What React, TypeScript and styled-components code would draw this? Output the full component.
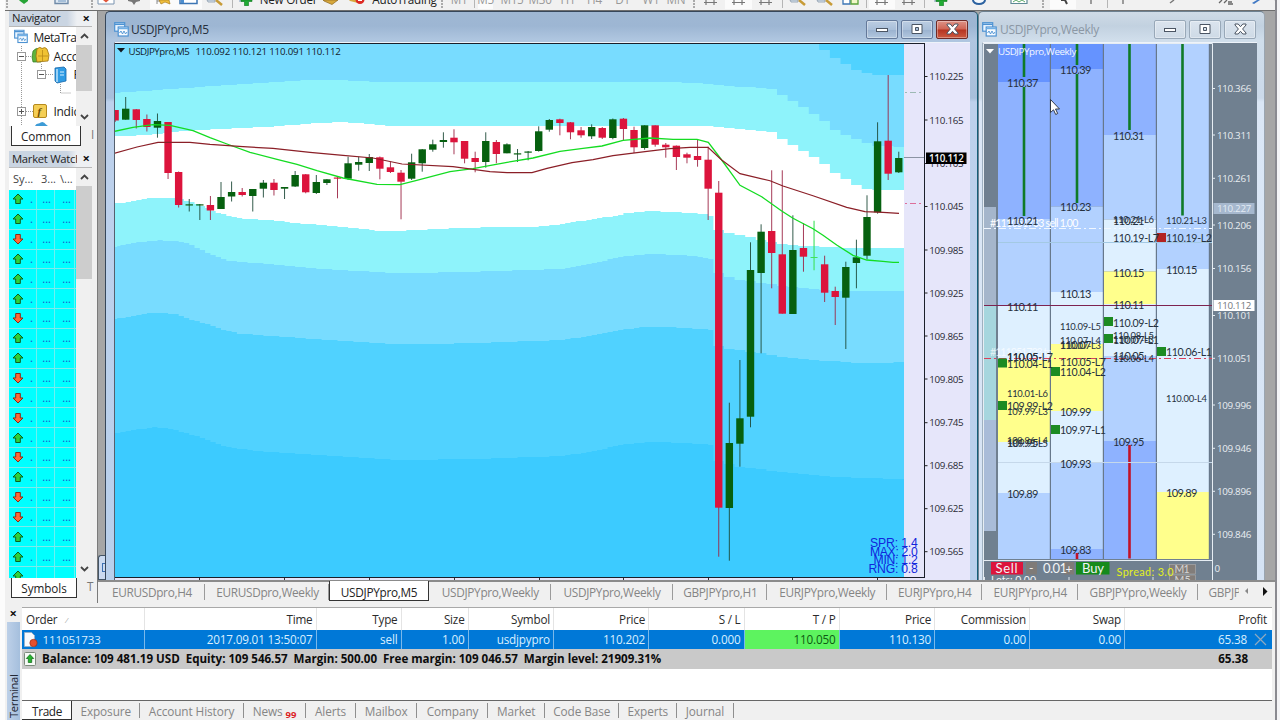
import React from "react";
import styled, { createGlobalStyle } from "styled-components";

const Global = createGlobalStyle`
  * { box-sizing: border-box; }
  body { margin: 0; background: #f0f0f0; font-family: "Open Sans", "Noto Sans", sans-serif; }
`;

const UI = `"Open Sans", "Noto Sans", sans-serif`;

/* ---------- frame ---------- */
const Screen = styled.div`
  display: flex; width: 1280px; height: 720px; overflow: hidden; background: #f0f0f0;
  font-family: ${UI}; font-size: 11.7px; letter-spacing: -0.3px; color: #222; white-space: nowrap;
`;
const LeftEdge = styled.div`width: 5px; background: #fcfcfc;`;
const Main = styled.div`width: 1270px; display: flex; flex-direction: column;`;
const RightEdge = styled.div`width: 5px; background: #f4f4f6; border-left: 2px solid #8a8a90;`;

/* ---------- toolbar ---------- */
const Toolbar = styled.div`
  height: 11px; overflow: hidden; display: flex; align-items: flex-start;
  border-bottom: 1px solid #6e6e6e; background: #f1f1f1;
`;
const ToolCell = styled.div<{ $w: number; $on?: boolean }>`
  flex: none; width: ${(p) => p.$w}px; height: 9px; display: flex; justify-content: center;
  background: ${(p) => (p.$on ? "#fbfbfb" : "transparent")};
  svg { display: block; flex: none; }
`;
const ToolText = styled.span<{ $dim?: boolean }>`
  margin-top: -9.5px; line-height: 16px; height: 16px; font-size: 11.7px; letter-spacing: -0.25px;
  margin-left: ${(p) => (p.$dim ? 0 : 3)}px; color: ${(p) => (p.$dim ? "#999" : "#222")};
`;
const Grip = styled.div`width: 2px; height: 8px; border-left: 2px dotted #aaa;`;
const Rule = styled.div`width: 1px; height: 8px; background: #b5b5b5;`;

type IconKind =
  | "newdoc" | "box" | "diamond" | "cross" | "star" | "panel" | "lens" | "plus" | "gold" | "auto"
  | "bars" | "tiles" | "clock" | "image" | "arrow" | "vline" | "slash" | "wave" | "pen" | "shape";

function ToolIcon({ kind }: { kind: IconKind }) {
  const art: Record<IconKind, React.ReactNode> = {
    newdoc: <path d="M5 0h9v1l-4 3-4-3z" fill="#27a436" />,
    box: <><path d="M3 0v3.500h13V0" fill="#dfeaf5" stroke="#6f8aa8" strokeWidth="1.400" /><path d="M6 1h8" stroke="#6d94bd" /></>,
    diamond: <><path d="M2 0v4h16V0" fill="#fff" stroke="#7a94b0" /><path d="M7 0l3 2.500L13 0z" fill="#e0553a" /></>,
    cross: <path d="M4 0h12v1l-4 1-2 3-2-3-4-1z" fill="#777" />,
    star: <><path d="M4 0v4M4 1h3" stroke="#8a8a8a" fill="none" /><path d="M6 0h10l1 4-5-2-4 2z" fill="#f0bf3c" stroke="#aa7d1c" strokeWidth=".700" /></>,
    panel: <><path d="M1 0v3.500h17V0" fill="#fff" stroke="#3c76b5" strokeWidth="1.500" /><path d="M2 0h3v3H2z" fill="#4d8fd0" /></>,
    lens: <><path d="M2 0h8v2H3z" fill="#d9e4ee" stroke="#8b9aab" strokeWidth=".800" /><path d="M11 0l6 5" stroke="#c79b37" strokeWidth="2.500" /></>,
    plus: <><path d="M3 0h7v2H3z" fill="#b8c7d8" /><path d="M5 0h11v1.500h-3.500v4.200h-4V1.500H5z" fill="#21ac34" stroke="#0d7a1e" strokeWidth=".600" /></>,
    gold: <path d="M2 0h15l-6 4.500L3 1z" fill="#d7a83c" stroke="#8d661c" strokeWidth=".700" />,
    auto: <><path d="M2 0h9v3L3 1z" fill="#d7a83c" /><circle cx="13" cy="-.5" r="4.500" fill="#dd2a24" /><path d="M11 0h4v1h-4z" fill="#fff" /></>,
    bars: <path d="M3 2.500h13M5 0v5M13 0v5" stroke="#777" strokeWidth="1.200" />,
    tiles: <><path d="M2 0v4h7V0" fill="#fff" stroke="#3c76b5" strokeWidth="1.300" /><path d="M10 0v4h7V0" fill="#f1f7c9" stroke="#5ba33a" strokeWidth="1.300" /></>,
    clock: <path d="M4 0a6 4 0 0 0 12 0" fill="#f4f8fc" stroke="#2c62a0" strokeWidth="2" />,
    image: <><path d="M2 0v3.500h16V0" fill="#fff" stroke="#5e8a96" strokeWidth="1.200" /><path d="M4 2l3-2 3 2 3-2 3 2" fill="none" stroke="#5aa867" /></>,
    arrow: <path d="M8 0h4l2 4" fill="none" stroke="#444" strokeWidth="2" />,
    vline: <path d="M10 0v4" stroke="#777" strokeWidth="1.400" />,
    slash: <path d="M7 3l4-3" stroke="#777" strokeWidth="1.400" />,
    wave: <path d="M3 3l3-3M8 3l3-3M12 4h5M12 2h4" stroke="#666" strokeWidth="1.300" />,
    pen: <path d="M6 3l5-3h3l-6 4z" fill="#3f78c4" />,
    shape: <><path d="M2 0q5 3 10 1" fill="none" stroke="#888" strokeWidth="1.500" /><path d="M13 0l3 1" stroke="#888" strokeWidth="2" /></>,
  };
  return <svg width="20" height="6" viewBox="0 0 20 6">{art[kind]}</svg>;
}

type ToolDef = [number, IconKind | "grip" | "rule" | "gap" | "text" | "dim", string?, boolean?];
const TOOLS: ToolDef[] = [
  [4, "grip"], [30, "newdoc"], [46, "box"], [6, "gap"], [2, "grip"], [2, "gap"], [22, "diamond"], [33, "cross"],
  [26, "star", "", true], [26, "panel", "", true], [26, "lens"], [8, "rule"], [20, "plus"], [62, "text", "New Order"],
  [26, "gold"], [26, "auto"], [66, "text", "AutoTrading"], [12, "grip"], [22, "dim", "M1"], [8, "rule"], [15, "dim", "M5", true],
  [38, "dim", "M15"], [18, "dim", "M30"], [38, "dim", "H1"], [15, "dim", "H4"], [41, "dim", "D1"], [16, "dim", "W1"], [34, "dim", "MN"],
  [2, "grip"], [2, "gap"], [28, "bars"], [27, "bars", "", true], [28, "bars"], [4, "rule"], [28, "lens"], [26, "lens"], [26, "tiles"],
  [5, "rule"], [26, "bars", "", true], [27, "bars"], [4, "rule"], [30, "plus"], [46, "clock"], [34, "image"],
  [14, "grip"], [26, "arrow", "", true], [30, "vline"], [2, "rule"], [30, "vline"], [70, "slash"], [36, "wave"], [2, "gap"], [20, "pen"], [34, "shape"],
];

/* ---------- docked panels ---------- */
const Workspace = styled.div`height: 592px; display: flex;`;
const Dock = styled.div`
  width: 92px; padding-left: 4px; display: flex; flex-direction: column; border-right: 0;
`;
const PanelTitle = styled.div<{ $h: number }>`
  width: 83px; height: ${(p) => p.$h}px; flex: none; display: flex; align-items: center; justify-content: space-between;
  padding: 0 2px 2px 3px; background: linear-gradient(90deg, #cad5e2 70%, #eef0f3 82%); font-size: 11.3px; overflow: hidden;
`;
const TitleWords = styled.span`width: 65px; overflow: hidden; line-height: 15px;`;
const CloseMark = styled.span`font-size: 13px; font-weight: 700; line-height: 14px; color: #111; letter-spacing: 0;`;
const PanelBody = styled.div<{ $h: number }>`
  width: 83px; height: ${(p) => p.$h}px; flex: none; display: flex; border-top: 1px solid #b9b9b9; overflow: hidden;
`;
const PanelContent = styled.div`width: 67px; background: #fff; overflow: hidden;`;
const Scroll = styled.div`
  width: 16px; background: #f0f0f0; display: flex; flex-direction: column; align-items: center;
  svg { display: block; flex: none; margin: 6px 0 6px; }
`;
const Thumb = styled.div<{ $h: number }>`width: 16px; height: ${(p) => p.$h}px; background: #cdcdcd;`;
const Grow = styled.div`flex: 1;`;
const PanelTabs = styled.div<{ $h: number }>`
  width: 87px; height: ${(p) => p.$h}px; flex: none; display: flex; padding-left: 2px; color: #777;
`;
const PanelTab = styled.div<{ $w: number }>`
  width: ${(p) => p.$w}px; height: 20px; background: #fff; border: 1px solid #333; border-top: 0;
  text-align: center; line-height: 20px; color: #222; margin-right: 10px; letter-spacing: -0.05px;
`;
const WatchHead = styled.div`height: 22px; display: flex; line-height: 22px; color: #444; font-size: 11px;`;
const HeadCell = styled.div<{ $w: number }>`width: ${(p) => p.$w}px; padding-left: 4px; overflow: hidden; letter-spacing: 0;`;
const WatchRow = styled.div`height: 19.85px; display: flex; background: #00ffff; border-bottom: 1px solid #7fe9e9;`;
const WatchCell = styled.div<{ $w: number }>`
  width: ${(p) => p.$w}px; display: flex; align-items: center; justify-content: flex-end; border-right: 1px solid #6df0f0;
  color: #1d55c8; line-height: 18px; padding: 0 3px; font-size: 11px; letter-spacing: 0;
  svg { margin-right: auto; }
`;

const Chevron = ({ up }: { up?: boolean }) => (
  <svg width="9" height="6" viewBox="0 0 9 6"><path d={up ? "M1 5l3.500-3.500L8 5" : "M1 1l3.500 3.500L8 1"} fill="none" stroke="#444" strokeWidth="1.800" /></svg>
);
const Tick = ({ up }: { up: boolean }) => (
  <svg width="12" height="12" viewBox="0 0 12 12">
    <path d="M6 1l5 5H8.300v4.500H3.700V6H1z" fill={up ? "#2fd03a" : "#ff6a36"} stroke={up ? "#0c5f1c" : "#8b2a14"} strokeWidth="1"
      transform={up ? undefined : "rotate(180 6 6)"} />
  </svg>
);
const WindowsIcon = ({ size = 15 }: { size?: number }) => (
  <svg width={size} height={size} viewBox="0 0 15 15">
    <rect x=".700" y=".700" width="10" height="8.500" fill="#eaf5ff" stroke="#4d92d2" strokeWidth="1.200" />
    <path d="M1 2.300h9.500" stroke="#4d92d2" strokeWidth="1.500" />
    <rect x="4.200" y="5" width="10" height="9" fill="#f7fbff" stroke="#4d92d2" strokeWidth="1.200" />
    <path d="M4.500 6.500h9.500" stroke="#71b0e6" strokeWidth="1.500" />
    <path d="M5.500 11l1.500-2 1.500 3 1.500-3 1.500 3 1.500-2" fill="none" stroke="#4d92d2" strokeWidth=".900" />
  </svg>
);

function NavTree() {
  return (
    <svg width="67" height="99" viewBox="9 27 67 99">
      <g stroke="#999" strokeDasharray="1 1" fill="none">
        <path d="M21.500 46v80M26 56.500h7M41.500 64v6M46 74.500h7M60.500 84v9h11M26 111.500h7" />
      </g>
      <g fill="#fff" stroke="#999"><rect x="17.500" y="52.500" width="8" height="8" /><rect x="37.500" y="70.500" width="8" height="8" /><rect x="17.500" y="107.500" width="8" height="8" /></g>
      <path d="M19 56.500h5M39 74.500h5M19 111.500h5M21.500 109v5" stroke="#555" />
      <g transform="translate(14 29.500)"><WindowsIcon size={14} /></g>
      <path d="M33 51q3-4 7-2l2 6-1 7-8 0-1-5z" fill="#5fb33c" stroke="#2f7a1f" strokeWidth=".700" />
      <path d="M37 49q3-3 5-.5 3-2 5 .5l2 6-1 6-11 1-1-6z" fill="#f0c233" stroke="#9d7413" strokeWidth=".800" />
      <path d="M42.500 50v11M38 56h10" stroke="#b98a18" strokeWidth=".800" />
      <path d="M55 68l9-1 2 2v12l-9 2-2-2z" fill="#2f9be4" stroke="#1566a8" strokeWidth=".800" />
      <path d="M57 69v13" stroke="#bfe3fb" strokeWidth="1.500" /><path d="M60 72h4M60 75h4" stroke="#d6efff" />
      <rect x="33.500" y="104.500" width="13" height="13" rx="1.500" fill="#f4ce55" stroke="#b58a1e" />
      <text x="37.500" y="115" fontFamily="Liberation Serif, serif" fontSize="11" fontStyle="italic" fontWeight="700" fill="#6b4a00">f</text>
      <path d="M35 126q1-3 4-2.500 4-3.500 7 1l2 1.500z" fill="#3d9bd6" />
      <g fontFamily={UI} fontSize="12" fill="#222">
        <text x="33.500" y="42" textLength="43">MetaTra</text>
        <text x="53.500" y="60.500">Acco</text>
        <text x="73.500" y="78.500">F</text>
        <text x="53.500" y="116">Indic</text>
      </g>
    </svg>
  );
}

/* ---------- chart windows ---------- */
const Mdi = styled.div`flex: 1; display: flex; flex-direction: column; overflow: hidden; border-left: 1px solid #7a7a7a;`;
const Desktop = styled.div`height: 569px; display: flex; background: #a6a6a6; overflow: hidden;`;
const Gutter = styled.div`width: 7px; display: flex; flex-direction: column; justify-content: flex-end;`;
const Stub = styled.div`height: 25px; border: 1px solid #456; border-radius: 3px 0 0 0; border-right: 0; background: #cbdaf0;
  display: flex; align-items: center; justify-content: flex-end;`;
const StubIcon = styled.div`width: 3px; height: 9px; border: 1px solid #3c6fb0; border-right: 0;`;
const Window = styled.div<{ $w: number; $active?: boolean }>`
  width: ${(p) => p.$w}px; flex: none; display: flex; flex-direction: column; padding: 1px 7px 0 ${(p) => (p.$active ? 8 : 3)}px;
  border: 1px solid ${(p) => (p.$active ? "#37475a" : "#6d8191")}; border-bottom: 0; border-radius: 5px 5px 0 0;
  border-right-color: ${(p) => (p.$active ? "#155f78" : "#9aa5b0")};
  background: ${(p) => p.$active
    ? "linear-gradient(#9fb7d3 0, #9db6d3 14px, #afc6e0 28px, #a7bfdb 86px, #bdd1ec 90px, #b9d0ec)"
    : "linear-gradient(#cfdbe7 0, #c2d1e0 14px, #d0deeb 28px, #ccdaea 86px, #dbe7f6 90px, #d5e3f4)"};
`;
const Caption = styled.div<{ $active?: boolean }>`
  height: 29px; flex: none; display: flex; align-items: center; gap: ${(p) => (p.$active ? 2 : 3)}px;
  padding: 4px ${(p) => (p.$active ? 2 : 1)}px 0 0;
  color: ${(p) => (p.$active ? "#26303d" : "#8b97a4")}; font-size: 12px;
`;
const CaptionText = styled.span`flex: 1; letter-spacing: -0.3px;`;
const Buttons = styled.div`display: flex; gap: 3px;`;
const CapButton = styled.div<{ $tone: "blue" | "red" | "pale" }>`
  width: 32px; height: 19px; display: flex; align-items: center; justify-content: center; border-radius: 2px;
  border: 1px solid ${(p) => (p.$tone === "red" ? "#6e2a26" : p.$tone === "blue" ? "#64799a" : "#98a8b8")};
  box-shadow: inset 0 0 0 1px rgba(255, 255, 255, 0.35); margin-top: -1px;
  background: ${(p) =>
    p.$tone === "red" ? "linear-gradient(#dd9387, #cf6454 48%, #b53320 52%, #cc5a40)"
    : p.$tone === "blue" ? "linear-gradient(#bccde2, #a9bfd9 50%, #9ab2cf 52%, #b2c7df)"
    : "linear-gradient(#dbe4ee, #cedae6)"};
`;
const Client = styled.div<{ $active?: boolean }>`
  flex: 1; border-top: 1px solid #eef3fa; border-left: 1px solid ${(p) => (p.$active ? "#55606e" : "#9fb0c0")};
  overflow: hidden; background: ${(p) => (p.$active ? "#e6e6fa" : "#708090")};
  svg { display: block; }
`;

function CaptionButtons({ active }: { active?: boolean }) {
  const tone = active ? "blue" : "pale";
  const s = { stroke: "#4b5563", strokeWidth: 1, fill: "#fff" };
  return (
    <Buttons>
      <CapButton $tone={tone}><svg width="12" height="12" viewBox="0 0 12 12"><rect x=".500" y="5.500" width="11" height="3" {...s} /></svg></CapButton>
      <CapButton $tone={tone}><svg width="12" height="12" viewBox="0 0 12 12"><path d="M1 1.500h10v9H1zM4.500 4.500v3h3v-3z" fillRule="evenodd" {...s} /></svg></CapButton>
      <CapButton $tone={active ? "red" : "pale"}><svg width="13" height="12" viewBox="0 0 13 12"><path d="M1 1h3.200l2.300 2.700L8.800 1H12v1L8.600 6l3.400 4v1H8.800L6.500 8.300 4.200 11H1v-1l3.400-4L1 2z" {...s} /></svg></CapButton>
    </Buttons>
  );
}

type Pts = [number, number][];
const BAR = 10.59;
const barX = (i: number) => 125.7 + BAR * i;
const at = (pts: Pts, x: number) => {
  if (x <= pts[0][0]) return pts[0][1];
  for (let k = 1; k < pts.length; k++) {
    const [x1, y1] = pts[k];
    const [x0, y0] = pts[k - 1];
    if (x <= x1) return y0 + ((y1 - y0) * (x - x0)) / (x1 - x0);
  }
  return pts[pts.length - 1][1];
};
const stepPath = (pts: Pts, fromBar = -1) => {
  let d = "";
  for (let i = fromBar; i <= 73; i++) {
    const xl = i === -1 ? 114 : barX(i) - BAR / 2;
    const xr = i === 73 ? 904 : barX(i) + BAR / 2;
    const half = (xl + xr) / 2;
    const steep = barX(i) > 712;
    const ya = Math.round(steep ? at(pts, barX(i)) : at(pts, (xl + half) / 2));
    const yb = Math.round(steep ? at(pts, barX(i)) : at(pts, (xr + half) / 2));
    d += `${d ? "L" : "M"}${xl.toFixed(1)} ${ya}H${half.toFixed(1)}V${yb}H${xr.toFixed(1)}`;
  }
  return d;
};

const TOP_CAP: Pts = [[813, 43], [824, 49], [834.500, 57.300], [845, 64], [856, 69.700], [866.700, 73.300], [877, 74.500], [904, 74.700]];
const UPPER_OUT: Pts = [[115, 93], [200, 87], [300, 80.500], [335, 80], [370, 81.500], [400, 82.300], [680, 82.300], [713, 84], [745, 87], [771, 88.300], [782, 95], [792.700, 101], [803.300, 107.300], [814, 113.500], [824.500, 121], [835, 130], [845.500, 134.500], [856, 139], [866.700, 143], [877, 146], [904, 147]];
const UPPER_IN: Pts = [[115, 136.500], [147, 135], [175, 132], [200, 130], [270, 126.700], [323, 122.700], [343, 122.200], [377, 124.500], [393, 126], [640, 126], [713, 126], [747, 130], [771, 131], [782, 139.300], [792.700, 145.300], [803.300, 151], [814, 156.700], [824.500, 164], [835, 172.700], [845.500, 179], [856, 184.700], [866.700, 189.300], [877, 190], [904, 190]];
const LOWER_IN: Pts = [[115, 203.500], [132, 201.500], [150, 198], [172, 197.700], [184, 200], [194, 203], [210, 209], [216, 213], [227, 215], [237, 218.300], [270, 220.300], [297, 223], [323, 225.300], [353, 228], [377, 230.600], [400, 230.700], [420, 230], [460, 228], [500, 227], [533, 227.300], [553, 225.300], [577, 221.700], [600, 218], [617, 215.700], [628, 213], [650, 211], [677, 212.300], [703, 213.700], [712, 216], [719, 231], [747, 236.700], [777, 243], [800, 246], [830, 247], [860, 248.300], [904, 247.700]];
const LOWER_OUT: Pts = [[115, 247.300], [133, 243], [157, 240.300], [175, 241], [190, 244], [207, 252.700], [225, 260], [240, 262], [270, 264], [320, 268.700], [400, 273.500], [480, 271.500], [560, 269], [590, 264], [620, 257], [650, 254], [680, 255], [710, 258], [719, 273], [736, 279], [770, 284], [800, 288], [830, 291], [850, 291.500], [904, 290.700]];
const BAND_3: Pts = [[115, 319], [133, 315.700], [157, 312.300], [175, 314], [190, 319], [207, 324], [220, 328.700], [240, 333.700], [270, 336], [320, 339.300], [400, 344.500], [480, 343], [560, 340], [590, 336], [620, 330], [650, 326.500], [680, 327.700], [713, 330], [719, 347], [760, 353], [790, 358], [820, 360.700], [870, 363.300], [904, 362.300]];
const BAND_4: Pts = [[115, 433.300], [133, 430], [157, 427], [175, 430], [200, 437], [220, 445], [240, 449], [270, 452], [320, 455], [400, 460], [480, 459], [560, 456], [590, 452], [620, 445], [650, 442], [680, 442.700], [713, 444.700], [719, 462], [745, 467.700], [790, 472.700], [830, 476.700], [904, 479]];

const FAST: Pts = [[114, 131.500], [133, 127.300], [153, 124.700], [170, 125.300], [193, 130.700], [210, 137.700], [227, 144], [250, 152.300], [277, 159.300], [297, 164.300], [317, 170.700], [343, 178], [377, 184.300], [400, 184.700], [416.700, 180.300], [450, 171.700], [473, 168.700], [507, 162.300], [533, 158], [560, 151.300], [583, 148.300], [602, 146], [623, 140.300], [650, 138], [673, 139.300], [697, 139.300], [708.300, 142.300], [721.700, 160], [740, 185.300], [761.700, 196.700], [781.700, 211], [793, 218.300], [813, 228.700], [823, 235.300], [836.700, 245], [853, 255.300], [866.700, 260], [883, 261.300], [893, 262.300], [899, 262.300]];
const SLOW: Pts = [[114, 153.500], [137, 147], [158, 142.300], [190, 142.300], [210, 144.300], [243, 146.700], [273, 148.300], [310, 152.300], [343, 155.300], [373, 158], [402, 164], [453, 166.700], [490, 171.700], [507, 172.700], [532, 172.700], [547, 168.300], [572, 162.700], [593, 159.700], [613, 155.700], [647, 151.300], [670, 148.700], [690, 147.300], [708, 147.300], [721.700, 160], [740, 173.700], [770, 180.700], [783, 186], [813, 195.700], [846.700, 207.300], [865, 211.700], [883, 212.300], [899, 213.300]];

/* high, body top, body bottom, low, direction — starting one bar left of the visible edge */
type Candle = [number, number, number, number, "u" | "d"];
const CANDLES: Candle[] = [
  [110, 110, 120.500, 122, "d"], [97, 108.700, 119.700, 119.700, "u"], [109, 109.300, 120, 128.500, "d"], [114.500, 119, 127, 131.500, "d"],
  [113.500, 121, 127.700, 137.700, "u"], [122, 122, 173, 179, "d"], [171.500, 172, 205, 207.500, "d"], [199, 204.300, 205.500, 211.500, "u"],
  [204, 204.300, 205.500, 220, "u"], [196, 205, 210.500, 220, "d"], [182, 197, 209, 209, "u"], [181.500, 192, 196.500, 201.500, "u"],
  [188, 192, 195, 196.500, "d"], [189, 189, 196, 211.500, "u"], [180, 182.700, 188.700, 197.500, "u"], [179, 182.700, 190, 195.500, "d"],
  [187, 187, 188.700, 199, "u"], [171, 175, 186.500, 187, "u"], [174, 174.300, 192.300, 193.300, "d"], [175, 182, 193, 194, "u"],
  [179, 179.300, 183, 185, "u"], [176.500, 177.500, 178.500, 198.300, "d"], [156.700, 163.300, 178.700, 180, "u"], [156.700, 162, 164.700, 170.700, "u"],
  [154, 157, 163, 171, "u"], [156.500, 157.300, 168.700, 179.300, "d"], [161.700, 167.300, 172, 173, "d"], [170, 172.700, 181.700, 219.300, "d"],
  [153.700, 162.300, 178.700, 180, "u"], [149, 149.300, 163.300, 171.700, "u"], [139.700, 144.300, 149.700, 151.700, "u"], [132.300, 140, 142, 147.700, "u"],
  [129.300, 137.700, 142.300, 154.300, "d"], [141, 141, 158.700, 163.300, "d"], [151.700, 158, 162, 172.300, "d"], [132.300, 141, 162, 167.700, "u"],
  [140, 142, 154, 163.300, "d"], [143.300, 144.300, 153.300, 153.300, "u"], [149, 153.300, 154.500, 162, "u"], [151, 151.500, 152.700, 160.300, "u"],
  [126.300, 131.300, 151, 151.700, "u"], [119, 120, 129.700, 131.700, "u"], [118.700, 119.300, 123, 135.300, "d"], [122, 122.300, 132.300, 139.300, "d"],
  [127, 130.300, 135.300, 137.700, "d"], [124.300, 127, 136.300, 139, "u"], [127, 128, 137.700, 139, "d"], [118.500, 119.300, 138, 139.300, "u"],
  [118, 118.700, 129, 140, "d"], [126.700, 130, 147.300, 153, "d"], [125.300, 125.300, 148, 149.700, "u"], [125.300, 125.300, 144.700, 146.700, "d"],
  [143, 144.700, 147.300, 157.700, "d"], [145.500, 145.700, 157, 170, "d"], [152.700, 154.300, 157.700, 163.300, "d"], [139.700, 156, 160, 166.700, "d"],
  [146.700, 159.700, 188.700, 220, "d"], [181, 192.700, 507.700, 556.700, "d"], [402.700, 443, 508, 560.700, "u"], [360, 418.300, 443.700, 466.700, "u"],
  [242.300, 270, 416.700, 427.300, "u"], [224.300, 231.700, 273, 353.300, "u"], [170.300, 231, 253, 288.300, "d"], [170.300, 254.300, 313.700, 313.700, "d"],
  [215.300, 250, 314, 314, "u"], [223, 248, 256.700, 271.700, "d"], [0, 0, 0, 0, "u"], [255.700, 264.300, 292.700, 302, "d"],
  [286.700, 291, 297, 325, "d"], [261.700, 267, 297.700, 349, "u"], [239.700, 257.300, 263, 288.300, "u"], [195.300, 217, 255.700, 259.300, "u"],
  [122.300, 141.300, 212.300, 213.700, "u"], [75, 140.700, 173.700, 180, "d"], [151.700, 158, 172.300, 173, "u"],
];

const M5_LABELS: [string, number][] = [
  ["110.225", 76.500], ["110.165", 120], ["110.105", 163.500], ["110.045", 206.500], ["109.985", 250], ["109.925", 293],
  ["109.865", 336], ["109.805", 379], ["109.745", 422.700], ["109.685", 465.700], ["109.625", 508.700], ["109.565", 551.700],
];

const poly = (p: Pts) => p.map((q) => q.join(",")).join(" ");

function M5Chart() {
  const fillBelow = (pts: Pts, color: string) => <path d={`${stepPath(pts)}V577H114Z`} fill={color} />;
  return (
    <svg width="856" height="538" viewBox="115 43 856 538">
      <rect x="114" y="42" width="857" height="540" fill="#e6e6fa" />
      <rect x="114" y="43" width="790" height="534" fill="#78dcff" />
      <path d={`${stepPath(TOP_CAP, 66)}V43H819Z`} fill="#50d2ff" />
      {fillBelow(UPPER_OUT, "#8ef3fb")}
      {fillBelow(UPPER_IN, "#fff")}
      {fillBelow(LOWER_IN, "#8ef3fb")}
      {fillBelow(LOWER_OUT, "#78dcff")}
      {fillBelow(BAND_3, "#50d2ff")}
      {fillBelow(BAND_4, "#3ccbff")}
      <g>
        {CANDLES.map(([h, t, b, l, dir], k) => {
          const x = barX(k - 1);
          const c = dir === "u" ? "#06600f" : "#dc143c";
          if (!h) return <path key={k} d={`M${x} 220.700V270.300M${x - 3.500} 257.500h7`} stroke="#3fe25c" strokeWidth="1.100" />;
          return (
            <g key={k}>
              <path d={`M${x} ${h}V${l}`} stroke={dir === "u" ? "#1d4a38" : "#9c2444"} strokeWidth=".900" />
              <rect x={x - 3.700} y={t} width="7.400" height={Math.max(b - t, 1.200)} fill={c} />
            </g>
          );
        })}
      </g>
      <polyline points={poly(FAST)} fill="none" stroke="#14dc22" strokeWidth="1.300" />
      <polyline points={poly(SLOW)} fill="none" stroke="#8b1f27" strokeWidth="1.200" />
      <path d="M905 92.500h19" stroke="#9db9b4" strokeDasharray="2 3 6 3" />
      <path d="M905 203.500h19" stroke="#dd6f9a" strokeDasharray="2 3 6 3" />
      <path d="M904 157.500h21" stroke="#8b93a3" />
      <path d="M114 43.500h811M924.500 43v534.500M114 577.500h811" stroke="#1b1f2a" fill="none" />
      <path d="M199.500 578v2M284.500 578v2M369.500 578v2M454.500 578v2M539.500 578v2M623.500 578v2M708.500 578v2M792.500 578v2M877.500 578v2" stroke="#333" />
      <path d="M117 48h8l-4 4.500z" fill="#101820" />
      <g fontFamily={UI} fontSize="9.700" fill="#12202c">
        <text x="128.500" y="54.500" textLength="61">USDJPYpro,M5</text>
        <text x="195.500" y="54.500" textLength="145">110.092 110.121 110.091 110.112</text>
      </g>
      <g fontFamily={UI} fontSize="9.800" fill="#2a2a33">
        {M5_LABELS.map(([t, y]) => (
          <g key={t}><path d={`M925 ${y}h2.500`} stroke="#222" /><text x="929.300" y={y + 3.600} textLength="34">{t}</text></g>
        ))}
      </g>
      <rect x="926" y="152.500" width="40.500" height="11.500" fill="#000" />
      <text x="929" y="161.800" fontFamily={UI} fontSize="9.800" fontWeight="600" fill="#f5f5f5" textLength="34.500">110.112</text>
      <g fontFamily='"Liberation Sans", Arial, sans-serif' fontSize="12.200" fill="#1226dc">
        {[["SPR: 1.4", 870, 47.500, 547.300], ["MAX: 2.0", 870, 47.500, 555.700], ["MIN: 1.2", 873.500, 44, 564.300], ["RNG: 0.8", 868.500, 49, 572.700]].map(([t, x, w, y]) => (
          <text key={String(t)} x={x} y={y} textLength={w}>{t}</text>
        ))}
      </g>
    </svg>
  );
}

/* zone colours of the weekly ladder, by distance from the middle */
const Z = { deep: "#6593ff", mid: "#8eb2ff", soft: "#b2d1ff", pale: "#def0ff", gold: "#ffff8c" };
type Zone = [number, string];
const LADDER: { x: number; w: number; zones: Zone[] }[] = [
  { x: 998, w: 52, zones: [[44, Z.deep], [82, Z.mid], [219, Z.soft], [305, Z.pale], [360, Z.gold], [442, Z.pale], [493, Z.soft]] },
  { x: 1051, w: 52, zones: [[44, Z.deep], [69, Z.mid], [206.500, Z.soft], [292, Z.pale], [344, Z.gold], [411, Z.pale], [462, Z.soft], [549, Z.mid]] },
  { x: 1104, w: 52, zones: [[44, Z.mid], [135, Z.soft], [219.500, Z.pale], [271.500, Z.gold], [304, Z.pale], [356, Z.soft], [441, Z.mid]] },
  { x: 1157, w: 52, zones: [[44, Z.soft], [269, Z.pale], [492, Z.gold]] },
];
/* text, x, centre y */
const LEVELS: [string, number, number][] = [
  ["110.37", 1007, 83], ["110.39", 1060, 70], ["110.31", 1113, 136], ["110.21", 1007, 220.500], ["110.23", 1060, 207],
  ["110.21", 1113, 221], ["110.15", 1113, 272.500], ["110.15", 1166, 270], ["110.13", 1060, 293.500], ["110.11", 1007, 306.500],
  ["110.11", 1113, 304.500], ["110.07", 1060, 345], ["110.05", 1113, 356], ["110.05", 1007, 356.500], ["109.99", 1060, 412],
  ["109.95", 1007, 442.500], ["109.95", 1113, 441.500], ["109.93", 1060, 463.500], ["109.89", 1007, 494], ["109.89", 1166, 493], ["109.83", 1060, 549.500],
];
const TAGS: [string, number, number][] = [
  ["110.19-L7", 1113, 238], ["110.19-L2", 1166, 238], ["110.09-L2", 1113, 322.500], ["110.07-L1", 1113, 339.500], ["110.06-L1", 1166, 352],
  ["110.05-L7", 1007, 356.500], ["110.04-L1", 1007, 363.500], ["110.05-L7", 1060, 362], ["110.04-L2", 1060, 372], ["109.99-L2", 1007, 406], ["109.97-L1", 1060, 430],
];
const SMALL_TAGS: [string, number, number][] = [
  ["110.21-L6", 1113, 219.500], ["110.21-L3", 1166, 221], ["110.09-L5", 1060, 326.500], ["110.07-L4", 1060, 340.500], ["110.07-L3", 1060, 345.500],
  ["110.08-L5", 1113, 336], ["110.07-L3", 1113, 340], ["110.06-L4", 1113, 358.500], ["110.01-L6", 1007, 394], ["109.99-L3", 1007, 411.500],
  ["110.00-L4", 1166, 398.500], ["109.96-L4", 1007, 440.500], ["109.95-L5", 1007, 443.500],
];
const MARKS: [number, number, string][] = [
  [998, 358.500, "#1c8b22"], [1051, 367, "#1c8b22"], [1104, 317, "#1c8b22"], [1104, 334, "#1c8b22"],
  [1157, 233, "#b22222"], [1157, 347, "#1c8b22"], [998, 401, "#1c8b22"], [1051, 425, "#1c8b22"],
];
const WEEKLY_LABELS: [string, number][] = [
  ["110.366", 88.500], ["110.311", 135], ["110.261", 178.300], ["110.206", 225], ["110.156", 268.500], ["110.101", 315.500],
  ["110.051", 358.300], ["109.996", 405], ["109.946", 448.300], ["109.896", 491.300], ["109.846", 534.300],
];

function WeeklyChart() {
  const geo = `Lato, "Open Sans", sans-serif`;
  return (
    <svg width="274" height="538" viewBox="983 43 274 538">
      <rect x="983" y="42" width="274" height="540" fill="#708090" />
      <rect x="984" y="207" width="12" height="98" fill="#a5b6cb" />
      <rect x="984" y="305" width="12" height="115" fill="#a6d6de" />
      <rect x="984" y="420" width="12" height="111" fill="#a9bcd8" />
      {LADDER.map(({ x, w, zones }) => (
        <g key={x}>
          {zones.map(([y, c], i) => {
            const end = i + 1 < zones.length ? zones[i + 1][0] : 559;
            return <rect key={y} x={x} y={y} width={w} height={end - y} fill={c} />;
          })}
          <path d={`M${x + w + 0.3} 44V559`} stroke="#66768a" />
        </g>
      ))}
      <path d="M1024 44v33M1024 87v129M1077 44v21M1077 74v129M1129.500 44v86M1182.500 44v171.500" stroke="#0f7a28" strokeWidth="2.600" />
      <path d="M1129.500 445v113.500M1077 553v6" stroke="#c11228" strokeWidth="2.600" />
      <path d="M998 242.500h214" stroke="#a3c9e3" />
      <path d="M998 462.500h214" stroke="#c5d8ea" />
      <path d="M984 228.500h228" stroke="#f1f7ff" strokeDasharray="7 3 2 3" />
      <path d="M984 358.500h228" stroke="#d8405a" strokeDasharray="7 3 2 3" />
      <path d="M984 305.500h228" stroke="#7d2350" strokeWidth="1.200" />
      {MARKS.map(([x, y, c]) => <rect key={`${x}-${y}`} x={x} y={y} width="9" height="9" fill={c} />)}
      <g fontFamily={geo} fill="#fff" fontSize="10.500">
        <text x="990" y="226.800" textLength="88">#111051733 sell 1.00</text>
        <text x="990" y="356" textLength="62" opacity=".7">#111051733 tp</text>
      </g>
      <g fontFamily={geo} fill="#26313e" letterSpacing="0">
        {LEVELS.map(([t, x, y], i) => <text key={i} x={x} y={y + 4} fontSize="11" textLength="31.500">{t}</text>)}
        {TAGS.map(([t, x, y], i) => <text key={i} x={x} y={y + 4} fontSize="10.600" textLength="46">{t}</text>)}
        {SMALL_TAGS.map(([t, x, y], i) => <text key={i} x={x} y={y + 3.400} fontSize="9.400" textLength="41">{t}</text>)}
      </g>
      <path d="M983.500 580V43.500H1212.500V580M984 560.500H1212" stroke="#e6edf3" fill="none" />
      <path d="M986 49h8l-4 4.500z" fill="#fff" />
      <text x="998" y="55" fontFamily={UI} fontSize="9.800" fill="#f4f8ff" textLength="78">USDJPYpro,Weekly</text>
      <g fontFamily={UI} fontSize="9.800" fill="#e9eef2">
        {WEEKLY_LABELS.map(([t, y]) => (
          <g key={t}><path d={`M1213 ${y}h2`} stroke="#e6edf3" /><text x="1217" y={y + 3.600} textLength="34">{t}</text></g>
        ))}
        <text x="1214.500" y="571.500">0</text>
      </g>
      <rect x="1213.500" y="203" width="41" height="11" fill="#a6b8ce" />
      <text x="1217" y="212.200" fontFamily={UI} fontSize="9.800" fill="#e3ebf4" textLength="34">110.227</text>
      <rect x="1213.500" y="300" width="41" height="11" fill="#fff" />
      <text x="1217" y="309.200" fontFamily={UI} fontSize="9.800" fill="#74787e" textLength="34">110.112</text>
      <rect x="991" y="562" width="32" height="12.500" fill="#dc143c" />
      <rect x="1026" y="562" width="11" height="12.500" fill="#7f7b78" />
      <rect x="1064" y="562" width="10" height="12.500" fill="#7f7b78" />
      <rect x="1076" y="562" width="33.500" height="12.500" fill="#158a1c" />
      <rect x="1169.500" y="564.500" width="26" height="9.500" fill="#827d7a" stroke="#b0b0b0" strokeWidth=".600" />
      <rect x="1169.500" y="575" width="26" height="6" fill="#827d7a" stroke="#b0b0b0" strokeWidth=".600" />
      <g fontFamily={geo} fill="#f2f4f6" fontSize="12" letterSpacing="0">
        <text x="995.500" y="572.800" fontSize="13" textLength="22">Sell</text>
        <text x="1029" y="572">-</text>
        <text x="1043" y="573" fontSize="13" textLength="24">0.01</text>
        <text x="1065.500" y="572.500">+</text>
        <text x="1082" y="572.800" fontSize="13" textLength="22">Buy</text>
        <text x="991" y="583.500" fontSize="10.500" textLength="45">Lots: 0.00</text>
        <text x="1174.500" y="573.300" fontSize="10.500" fill="#d5d5d5" textLength="15">M1</text>
        <text x="1174.500" y="583.500" fontSize="10.500" fill="#d5d5d5" textLength="16">M5</text>
        <text x="1116.500" y="575.500" fontSize="10.800" fill="#e2f01c" textLength="57">Spread: 3.0</text>
      </g>
      <path d="M984.500 577v3M1069 577v3M1153 577v3" stroke="#dfe6ec" />
      <path d="M1050.500 99.500v13l3-2.700 2.200 4.700 2-1-2.200-4.500h4z" fill="#fff" stroke="#222a38" strokeWidth=".900" />
    </svg>
  );
}

/* ---------- chart tabs ---------- */
const ChartTabs = styled.div`
  height: 23px; flex: none; display: flex; border-top: 2px solid #8b8b8b; background: #f0f0f0; color: #858585; font-size: 11.8px;
`;
const ChartTab = styled.div<{ $w: number; $active?: boolean; $left?: boolean }>`
  width: ${(p) => p.$w}px; height: ${(p) => (p.$active ? 20 : 16)}px; margin-top: ${(p) => (p.$active ? -1 : 2)}px;
  padding-top: ${(p) => (p.$active ? 3 : 0)}px; flex: none; line-height: 17px; letter-spacing: -0.3px;
  text-align: ${(p) => (p.$left ? "left" : "center")}; padding-left: ${(p) => (p.$left ? 11 : p.$active ? 0 : 2)}px;
  overflow: ${(p) => (p.$left ? "hidden" : "visible")};
  background: ${(p) => (p.$active ? "#fff" : "transparent")}; color: ${(p) => (p.$active ? "#222" : "inherit")};
  border-right: 1px solid ${(p) => (p.$active ? "#333" : p.$left ? "transparent" : "#9b9b9b")};
  border-left: ${(p) => (p.$active ? "1px solid #333" : "0")}; border-bottom: ${(p) => (p.$active ? "1px solid #333" : "0")};
`;
const TabArrows = styled.div`display: flex; gap: 13px; margin: 5px 0 0 4px; svg { display: block; }`;
const CHART_TABS: [string, number][] = [
  ["EURUSDpro,H4", 107], ["EURUSDpro,Weekly", 124], ["USDJPYpro,M5", 100], ["USDJPYpro,Weekly", 121.500], ["USDJPYpro,Weekly", 122],
  ["GBPJPYpro,H1", 94.500], ["EURJPYpro,Weekly", 119.500], ["EURJPYpro,H4", 95.500], ["EURJPYpro,H4", 95.500], ["GBPJPYpro,Weekly", 120],
];

/* ---------- terminal ---------- */
const Terminal = styled.div`flex: 1; display: flex; padding-top: 4px;`;
const Spine = styled.div`width: 17px; padding-left: 2px; display: flex; flex-direction: column; align-items: flex-start;`;
const SpineClose = styled.div`height: 15px; width: 12px; text-align: center; font-size: 13px; font-weight: 700; line-height: 12px; color: #111;`;
const SpineLabel = styled.div`
  width: 13px; flex: 1; background: linear-gradient(90deg, #a5bfdd, #bdd0e8); display: flex; justify-content: flex-start;
  writing-mode: vertical-rl; transform: rotate(180deg); line-height: 13px; font-size: 11.3px; color: #1a2330; letter-spacing: -0.4px;
  padding-top: 2px; padding-left: 1.5px;
`;
const Sheet = styled.div`width: 1250px; display: flex; flex-direction: column; border-top: 1px solid #a9a9a9; background: #fff;`;
const Cols = styled.div<{ $selected?: boolean }>`
  display: grid; grid-template-columns: 123px 171.500px 85px 67px 85.500px 95px 95.500px 95px 95.500px 95px 95px 1fr; flex: none;
  height: ${(p) => (p.$selected ? 19.5 : 21.5)}px; background: ${(p) => (p.$selected ? "#0078d7" : "#fff")};
  color: ${(p) => (p.$selected ? "#d9efff" : "#2b2b2b")}; letter-spacing: ${(p) => (p.$selected ? "-0.16px" : "-0.2px")};
`;
const Cell = styled.div<{ $left?: boolean; $mark?: boolean; $sel?: boolean; $last?: boolean }>`
  display: flex; align-items: center; justify-content: ${(p) => (p.$left ? "flex-start" : "flex-end")};
  padding: ${(p) => (p.$sel ? 0 : 2)}px ${(p) => (p.$last ? 4 : 3)}px 0 ${(p) => (p.$left && p.$sel ? 2 : 4)}px;
  border-right: 1px solid ${(p) => (p.$last ? "transparent" : p.$sel ? "#7ab8ea" : "#e4e4e4")}; line-height: 19px;
  background: ${(p) => (p.$mark ? "#5df35f" : "transparent")}; color: ${(p) => (p.$mark ? "#0e5a12" : "inherit")};
  font-size: 11.700px;
  svg { display: block; flex: none; }
`;
const OrderNo = styled.span`margin-left: 4.5px; font-size: 11.600px;`;
const SortMark = styled.span`margin-left: 9px; font-size: 8px; color: #999;`;
const Summary = styled.div`
  height: 19.500px; flex: none; background: #c9c9c9; display: flex; align-items: center; padding: 0 24px 0 2px; color: #0c0c0c;
  font-weight: 700; font-size: 11.600px; letter-spacing: -0.020px; white-space: pre;
`;
const SummaryText = styled.span`flex: 1; margin-left: 6px;`;
const TermTabs = styled.div`
  height: 20px; margin-top: auto; flex: none; display: flex; background: #f0f0f0; border-top: 1px solid #666; color: #858585; font-size: 11.800px;
`;
const TermTab = styled.div<{ $w: number; $active?: boolean }>`
  width: ${(p) => p.$w}px; flex: none; height: ${(p) => (p.$active ? 19 : 15)}px; margin-top: ${(p) => (p.$active ? 0 : 2)}px;
  text-align: center; line-height: ${(p) => (p.$active ? 20 : 16)}px; letter-spacing: ${(p) => (p.$active ? -0.35 : -0.1)}px;
  padding-left: 1px;
  background: ${(p) => (p.$active ? "#fff" : "transparent")}; color: ${(p) => (p.$active ? "#222" : "inherit")};
  border-right: 1px solid ${(p) => (p.$active ? "#333" : "#8f8f8f")}; border-bottom: ${(p) => (p.$active ? "1px solid #333" : "0")};
`;
const Badge = styled.span`color: #dc1f26; font-weight: 700; font-size: 9.500px; margin-left: 3px; position: relative; top: 2px;`;
const TERM_TABS: [string, number][] = [
  ["Trade", 50], ["Exposure", 67.500], ["Account History", 104], ["News", 62], ["Alerts", 50], ["Mailbox", 61.500], ["Company", 71],
  ["Market", 56.500], ["Code Base", 74.500], ["Experts", 57.500], ["Journal", 57],
];
const HEAD = ["Time", "Type", "Size", "Symbol", "Price", "S / L", "T / P", "Price", "Commission", "Swap", "Profit"];
const ORDER = ["2017.09.01 13:50:07", "sell", "1.00", "usdjpypro", "110.202", "0.000", "110.050", "110.130", "0.00", "0.00"];
/* price direction of each watched symbol */
const WATCH = [1, 1, 0, 1, 1, 1, 0, 1, 1, 0, 0, 0, 1, 0, 1, 0, 0, 1, 1, 1];

export default function App() {
  return (
    <Screen>
      <Global />
      <LeftEdge />
      <Main>
        <Toolbar>
          {TOOLS.map(([w, kind, label, on], i) => (
            <ToolCell key={i} $w={w} $on={on}>
              {kind === "grip" ? <Grip /> : kind === "rule" ? <Rule /> : kind === "gap" ? null
                : kind === "text" || kind === "dim" ? <ToolText $dim={kind === "dim"}>{label}</ToolText>
                : <ToolIcon kind={kind} />}
            </ToolCell>
          ))}
        </Toolbar>
        <Workspace>
          <Dock>
            <PanelTitle $h={15}><TitleWords>Navigator</TitleWords><CloseMark>×</CloseMark></PanelTitle>
            <PanelBody $h={100}>
              <PanelContent><NavTree /></PanelContent>
              <Scroll><Chevron up /><Thumb $h={46} /><Grow /><Chevron /></Scroll>
            </PanelBody>
            <PanelTabs $h={25}><PanelTab $w={70}>Common</PanelTab>I</PanelTabs>
            <PanelTitle $h={16}><TitleWords>Market Watch</TitleWords><CloseMark>×</CloseMark></PanelTitle>
            <PanelBody $h={411}>
              <PanelContent>
                <WatchHead><HeadCell $w={28}>Sy...</HeadCell><HeadCell $w={19}>3...</HeadCell><HeadCell $w={20}>\...</HeadCell></WatchHead>
                {WATCH.map((up, i) => (
                  <WatchRow key={i}>
                    <WatchCell $w={28}><Tick up={!!up} />.</WatchCell>
                    <WatchCell $w={18}>...</WatchCell>
                    <WatchCell $w={20}>...</WatchCell>
                  </WatchRow>
                ))}
              </PanelContent>
              <Scroll><Chevron up /><Thumb $h={93} /><Grow /><Chevron /></Scroll>
            </PanelBody>
            <PanelTabs $h={25}><PanelTab $w={66}>Symbols</PanelTab>T</PanelTabs>
          </Dock>
          <Mdi>
            <Desktop>
              <Gutter><Stub><StubIcon /></Stub></Gutter>
              <Window $w={873} $active>
                <Caption $active>
                  <WindowsIcon /><CaptionText>USDJPYpro,M5</CaptionText><CaptionButtons active />
                </Caption>
                <Client $active><M5Chart /></Client>
              </Window>
              <Window $w={287}>
                <Caption>
                  <WindowsIcon /><CaptionText>USDJPYpro,Weekly</CaptionText><CaptionButtons />
                </Caption>
                <Client><WeeklyChart /></Client>
              </Window>
            </Desktop>
            <ChartTabs>
              {CHART_TABS.map(([t, w], i) => <ChartTab key={i} $w={w} $active={i === 2}>{t}</ChartTab>)}
              <ChartTab $w={42} $left>GBPJP</ChartTab>
              <TabArrows>
                <svg width="5" height="8" viewBox="0 0 5 8"><path d="M4 1v6L1 4z" fill="#888" /></svg>
                <svg width="6" height="9" viewBox="0 0 6 9"><path d="M1 0v9l4.500-4.500z" fill="#111" /></svg>
              </TabArrows>
            </ChartTabs>
          </Mdi>
        </Workspace>
        <Terminal>
          <Spine><SpineClose>×</SpineClose><SpineLabel>Terminal</SpineLabel></Spine>
          <Sheet>
            <Cols>
              <Cell $left>Order<SortMark>⁄</SortMark></Cell>
              {HEAD.map((h, i) => <Cell key={i} $last={i === HEAD.length - 1}>{h}</Cell>)}
            </Cols>
            <Cols $selected>
              <Cell $left $sel>
                <svg width="14" height="15" viewBox="0 0 14 15">
                  <path d="M.500 .500h7l3 3v11H.500z" fill="#f7fafd" stroke="#9cb0c4" strokeWidth=".800" />
                  <circle cx="9.500" cy="11" r="3.700" fill="#e4502e" stroke="#8d2710" strokeWidth=".600" />
                </svg>
                <OrderNo>111051733</OrderNo>
              </Cell>
              {ORDER.map((v, i) => <Cell key={i} $sel $mark={i === 6}>{v}</Cell>)}
              <Cell $sel $last>
                65.38
                <svg width="20" height="13" viewBox="0 0 20 13"><path d="M8 1l11 11M19 1L8 12" stroke="#8fa9bf" strokeWidth="1.200" /></svg>
              </Cell>
            </Cols>
            <Summary>
              <svg width="12" height="14" viewBox="0 0 12 14">
                <rect x=".500" y=".500" width="11" height="13" rx="1" fill="#f6faf6" stroke="#7c8a7c" />
                <path d="M6 2.500l3.700 4H7.700v4H4.300v-4h-2z" fill="#25b32e" stroke="#0b6414" strokeWidth=".700" />
              </svg>
              <SummaryText>{"Balance: 109 481.19 USD  Equity: 109 546.57  Margin: 500.00  Free margin: 109 046.57  Margin level: 21909.31%"}</SummaryText>
              65.38
            </Summary>
            <TermTabs>
              {TERM_TABS.map(([t, w], i) => (
                <TermTab key={t} $w={w} $active={i === 0}>{t}{t === "News" && <Badge>99</Badge>}</TermTab>
              ))}
            </TermTabs>
          </Sheet>
        </Terminal>
      </Main>
      <RightEdge />
    </Screen>
  );
}
